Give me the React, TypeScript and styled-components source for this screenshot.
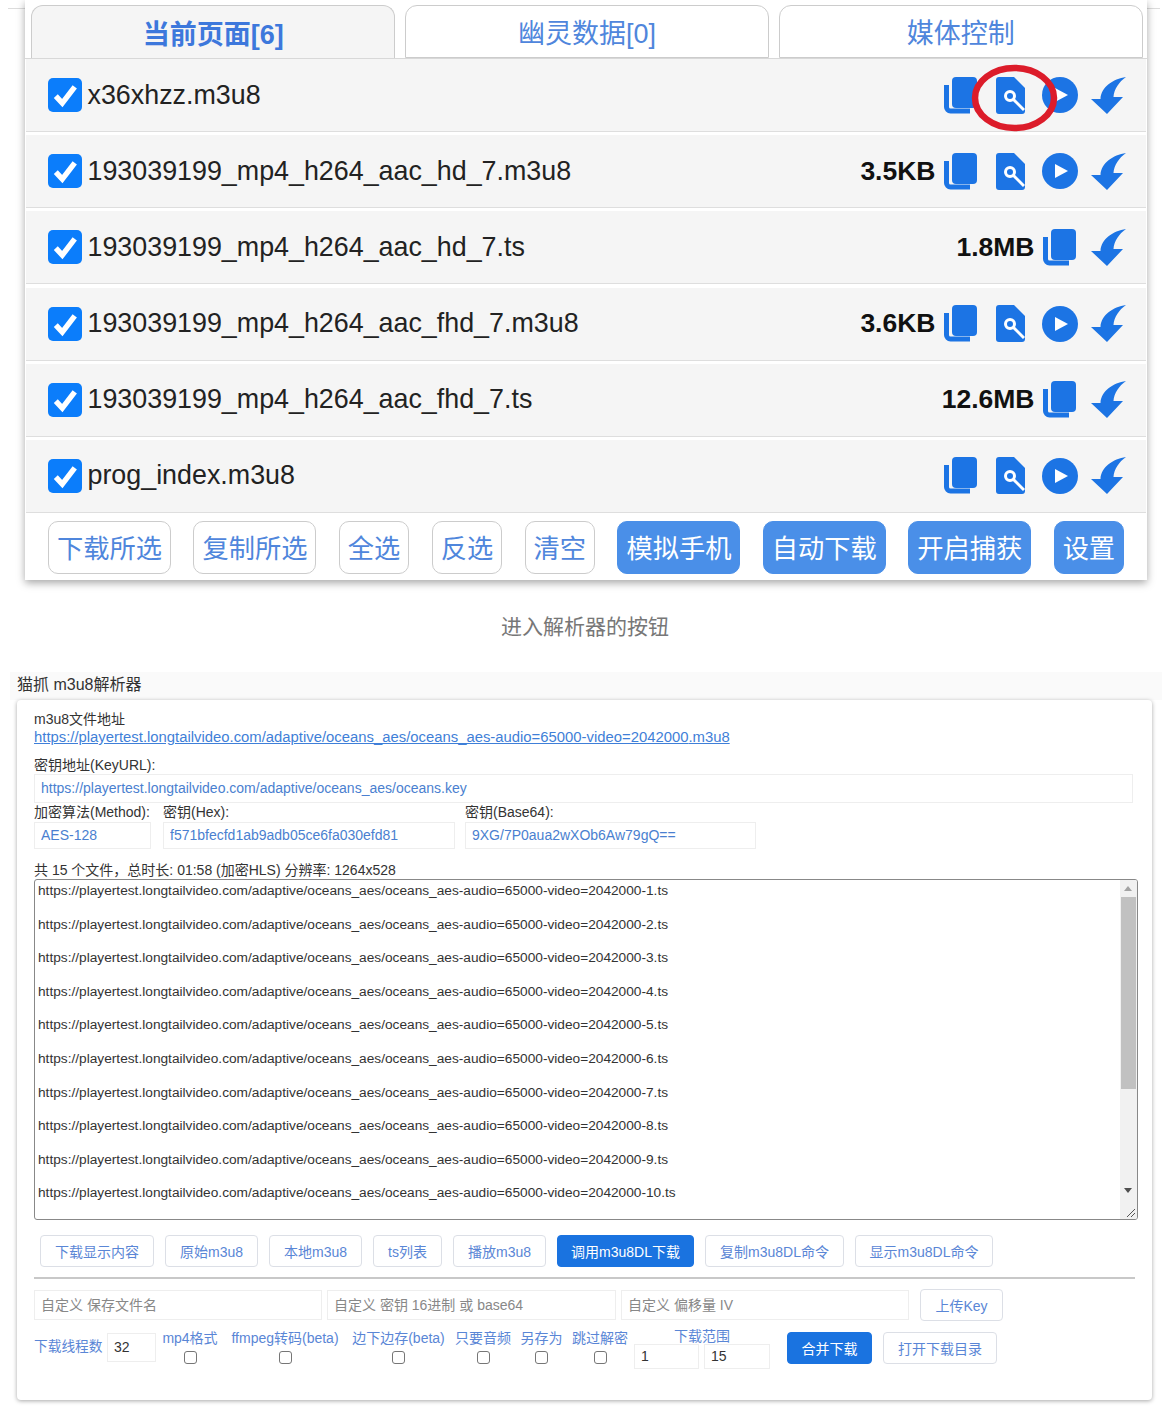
import React from "react";
import styled, { createGlobalStyle } from "styled-components";

const Global = createGlobalStyle`
  html, body { margin: 0; padding: 0; background: #fff; }
  body { width: 1170px; height: 1411px; overflow: hidden; font-family: "Liberation Sans", "Noto Sans CJK SC", sans-serif; }
  * { box-sizing: border-box; }
`;

const Page = styled.div`
  position: relative;
  width: 1170px;
  height: 1411px;
  overflow: hidden;
`;
const EdgeRule = styled.div`
  position: absolute;
  top: 8px;
  left: 8px;
  width: 1152px;
  height: 1px;
  background: #dcdcdc;
`;
const TopPanel = styled.section`
  position: relative;
  margin: 0 23px 0 25px;
  height: 580px;
  background: #fff;
  box-shadow: 0 3px 8px rgba(0, 0, 0, 0.35);
`;
const Tabs = styled.div`
  display: flex;
  gap: 9.5px;
  height: 59px;
  padding: 5px 4px 0 6px;
  border-bottom: 1px solid #d8d8d8;
`;
const Tab = styled.div<{ $active?: boolean }>`
  flex: 1;
  display: flex;
  align-items: center;
  justify-content: center;
  height: 53px;
  border: 1px solid #ccc;
  border-bottom: ${(p) => (p.$active ? "none" : "1px solid #ccc")};
  border-radius: 12px 12px 0 0;
  background: ${(p) => (p.$active ? "#f5f5f5" : "#fff")};
  color: ${(p) => (p.$active ? "#3d78dc" : "#4f86dc")};
  font-size: 27px;
  font-weight: ${(p) => (p.$active ? 700 : 400)};
`;
const RowList = styled.div`
  display: flex;
  flex-direction: column;
  gap: 3.2px;
`;
const Row = styled.div`
  display: flex;
  align-items: center;
  height: 73px;
  margin: 0 1px;
  padding: 0 19px 0 22px;
  background: #f5f5f5;
  border-bottom: 1px solid #dedede;
`;
const Check = styled.span`
  display: flex;
  align-items: center;
  justify-content: center;
  width: 34px;
  height: 34px;
  border-radius: 5px;
  background: #0b7dfb;
  flex: none;
`;
const FileName = styled.span`
  margin-left: 5.5px;
  font-size: 26.85px;
  color: #222;
`;
const Size = styled.span`
  margin-left: auto;
  margin-right: 7px;
  font-size: 26.5px;
  font-weight: 700;
  color: #111;
`;
const Icons = styled.div<{ $auto?: boolean }>`
  display: flex;
  align-items: center;
  gap: 13.5px;
  margin-left: ${(p) => (p.$auto ? "auto" : "0")};
`;
const IconBox = styled.span`
  display: flex;
  align-items: center;
  justify-content: center;
  width: 36px;
  height: 37px;
`;
const Footer = styled.div`
  display: flex;
  gap: 22.4px;
  height: 67px;
  padding: 8px 23px 6px 23px;
`;
const BigButton = styled.div<{ $fill?: boolean }>`
  display: flex;
  align-items: center;
  justify-content: center;
  height: 53px;
  padding: 0 8px;
  border-radius: 10px;
  border: 1px solid ${(p) => (p.$fill ? "#4a8fe8" : "#ccc")};
  background: ${(p) => (p.$fill ? "#4a8fe8" : "#fff")};
  color: ${(p) => (p.$fill ? "#fff" : "#4f86dc")};
  font-size: 26.25px;
  white-space: nowrap;
`;
const Ring = styled.svg`
  position: absolute;
  left: 946px;
  top: 64px;
`;
const Caption = styled.div`
  height: 26px;
  margin-top: 34px;
  text-align: center;
  font-size: 21px;
  line-height: 26px;
  color: #777;
`;
const Section = styled.section`
  margin: 32px 8px 0 10px;
  background: linear-gradient(#fafafa, #fafafa 28px, #fff 28px);
`;
const SectionTitle = styled.div`
  height: 28px;
  padding-left: 7px;
  font-size: 16px;
  line-height: 25px;
  color: #333;
`;
const Card = styled.div`
  width: 1135px;
  height: 700px;
  margin-left: 7px;
  padding: 10px 14px 0 17px;
  background: #fff;
  border-radius: 4px;
  box-shadow: 0 1px 4px rgba(0, 0, 0, 0.35);
`;
const Label = styled.div<{ $top?: number }>`
  height: 18px;
  margin-top: ${(p) => p.$top ?? 0}px;
  font-size: 14px;
  line-height: 18px;
  color: #333;
  white-space: nowrap;
`;
const LinkLine = styled.a`
  display: block;
  height: 18px;
  font-size: 14.85px;
  line-height: 18px;
  color: #3f7fd8;
  text-decoration: underline;
  white-space: nowrap;
`;
const Field = styled.input<{ $w: number; $h?: number }>`
  display: block;
  flex: none;
  width: ${(p) => p.$w}px;
  height: ${(p) => p.$h ?? 27}px;
  padding: 0 6px 1px;
  border: 1px solid #eeeeee;
  outline: none;
  background: #fff;
  font-family: inherit;
  font-size: 14px;
  color: #4a7fd0;
  &::placeholder {
    color: #888;
    opacity: 1;
  }
`;
const DarkField = styled(Field)`
  color: #333;
`;
const KeyGrid = styled.div`
  display: grid;
  grid-template-columns: 129px 302px auto;
  height: 46px;
  grid-template-rows: 19px 27px;
  justify-content: start;
`;
const FileBox = styled.div`
  display: flex;
  width: 1104px;
  height: 341px;
  border: 1px solid #888;
  border-radius: 3px;
  overflow: hidden;
`;
const Lines = styled.div`
  flex: 1;
  padding: 2px 0 0 3px;
  overflow: hidden;
`;
const Line = styled.div`
  height: 33.6px;
  font-size: 13.7px;
  line-height: 18px;
  color: #333;
  white-space: nowrap;
`;
const Track = styled.div`
  position: relative;
  flex: none;
  width: 17px;
  background: #f1f1f1;
`;
const Thumb = styled.div`
  position: absolute;
  top: 17px;
  left: 1px;
  width: 15px;
  height: 192px;
  background: #c1c1c1;
`;
const ArrowUp = styled.div`
  position: absolute;
  top: 6px;
  left: 4px;
  border: 4px solid transparent;
  border-top: 0;
  border-bottom: 5px solid #a3a3a3;
`;
const ArrowDown = styled.div`
  position: absolute;
  top: 308px;
  left: 4px;
  border: 4px solid transparent;
  border-bottom: 0;
  border-top: 5px solid #505050;
`;
const Grip = styled.svg`
  position: absolute;
  right: 1px;
  bottom: 1px;
`;
const ButtonRow = styled.div`
  display: flex;
  gap: 11px;
  margin-top: 15px;
  padding-left: 6px;
`;
const SmallButton = styled.div<{ $fill?: boolean; $w: number; $h?: number }>`
  display: flex;
  flex: none;
  align-items: center;
  justify-content: center;
  width: ${(p) => p.$w}px;
  height: ${(p) => p.$h ?? 32}px;
  padding-bottom: 1px;
  border: 1px solid ${(p) => (p.$fill ? "#1a73e0" : "#dcdfe6")};
  border-radius: 4px;
  background: ${(p) => (p.$fill ? "#1a73e0" : "#fff")};
  color: ${(p) => (p.$fill ? "#fff" : "#5a86d6")};
  font-size: 14px;
  white-space: nowrap;
`;
const Divider = styled.div`
  width: 1101px;
  height: 2px;
  margin-top: 10px;
  background: #c8c8c8;
`;
const InputsRow = styled.div`
  display: flex;
  align-items: center;
  gap: 5px;
  margin-top: 10px;
`;
const UploadSlot = styled.div`
  margin-left: 6px;
`;
const OptionsRow = styled.div`
  display: flex;
  align-items: flex-start;
  margin-top: 7px;
`;
const ThreadLabel = styled.span`
  width: 73px;
  margin-top: 10px;
  font-size: 13.7px;
  line-height: 18px;
  color: #5a86d6;
  white-space: nowrap;
`;
const ThreadSlot = styled.div`
  margin-top: 5px;
`;
const Options = styled.div`
  display: flex;
  gap: 10.5px;
  margin-left: 6px;
`;
const Option = styled.label<{ $w: number }>`
  display: flex;
  flex-direction: column;
  align-items: center;
  width: ${(p) => p.$w}px;
  font-size: 14px;
  line-height: 20px;
  color: #5a86d6;
  white-space: nowrap;
`;
const OptionBox = styled.span`
  display: block;
  width: 13px;
  height: 13px;
  margin-top: 3px;
  border: 1px solid #767676;
  border-radius: 3px;
  background: #fff;
`;
const RangeColumn = styled.div`
  display: flex;
  flex-direction: column;
  width: 136px;
  margin-left: 6.5px;
`;
const RangeTitle = styled.div`
  height: 16px;
  text-align: center;
  font-size: 14px;
  line-height: 16px;
  color: #5a86d6;
`;
const RangeInputs = styled.div`
  display: flex;
  gap: 5px;
`;
const ActionSlot = styled.div`
  display: flex;
  gap: 11px;
  margin: 4px 0 0 17px;
`;

const CheckMark = () => (
  <svg width="26" height="26" viewBox="0 0 24 24">
    <path d="M3.5 13 L9.5 19.5 L21 4.5" fill="none" stroke="#fff" strokeWidth="5" />
  </svg>
);
const CopyIcon = () => (
  <svg width="36" height="37" viewBox="0 0 36 37">
    <rect x="9" y="0" width="25" height="31" rx="4" fill="#1c74e4" />
    <path d="M3.5 8 V30 a4 4 0 0 0 4 4 H27" fill="none" stroke="#1c74e4" strokeWidth="5" />
  </svg>
);
const DocIcon = () => (
  <svg width="29" height="37" viewBox="0 0 29 37">
    <path d="M3 0 H18 L29 11 V34 a3 3 0 0 1 -3 3 H3 a3 3 0 0 1 -3 -3 V3 a3 3 0 0 1 3 -3z" fill="#1c74e4" />
    <circle cx="14" cy="19" r="4.5" fill="#1c74e4" stroke="#fff" strokeWidth="3" />
    <path d="M17.5 22.5 L28 33" stroke="#fff" strokeWidth="3" />
  </svg>
);
const PlayIcon = () => (
  <svg width="36" height="36" viewBox="0 0 36 36">
    <circle cx="18" cy="18" r="18" fill="#1c74e4" />
    <path d="M13 11 L26 18 L13 25z" fill="#fff" />
  </svg>
);
const SwooshIcon = () => (
  <svg width="36" height="37" viewBox="0 0 36 37">
    <path d="M35 0 C22 2 10 10 9.5 22 H0 L16 37 L32 20 H22.5 C23 12 28 5 35 0Z" fill="#1c74e4" />
  </svg>
);

const files = [
  { name: "x36xhzz.m3u8", play: true },
  { name: "193039199_mp4_h264_aac_hd_7.m3u8", size: "3.5KB", play: true },
  { name: "193039199_mp4_h264_aac_hd_7.ts", size: "1.8MB" },
  { name: "193039199_mp4_h264_aac_fhd_7.m3u8", size: "3.6KB", play: true },
  { name: "193039199_mp4_h264_aac_fhd_7.ts", size: "12.6MB" },
  { name: "prog_index.m3u8", play: true },
];
const outlined = ["下载所选", "复制所选", "全选", "反选", "清空"];
const filled = ["模拟手机", "自动下载", "开启捕获", "设置"];
const base = "https://playertest.longtailvideo.com/adaptive/oceans_aes/oceans_aes-audio=65000-video=2042000";
const tools: [string, number, boolean?][] = [
  ["下载显示内容", 114],
  ["原始m3u8", 93],
  ["本地m3u8", 93],
  ["ts列表", 69],
  ["播放m3u8", 93],
  ["调用m3u8DL下载", 137, true],
  ["复制m3u8DL命令", 139],
  ["显示m3u8DL命令", 138],
];
const options: [string, number][] = [
  ["mp4格式", 56],
  ["ffmpeg转码(beta)", 113],
  ["边下边存(beta)", 93],
  ["只要音频", 55],
  ["另存为", 41],
  ["跳过解密", 55],
];

export default function App() {
  return (
    <Page>
      <Global />
      <EdgeRule />
      <TopPanel>
        <Tabs>
          <Tab $active>当前页面[6]</Tab>
          <Tab>幽灵数据[0]</Tab>
          <Tab>媒体控制</Tab>
        </Tabs>
        <RowList>
          {files.map((f) => (
            <Row key={f.name}>
              <Check>
                <CheckMark />
              </Check>
              <FileName>{f.name}</FileName>
              {f.size && <Size>{f.size}</Size>}
              <Icons $auto={!f.size}>
                <IconBox><CopyIcon /></IconBox>
                {f.play && <IconBox><DocIcon /></IconBox>}
                {f.play && <IconBox><PlayIcon /></IconBox>}
                <IconBox><SwooshIcon /></IconBox>
              </Icons>
            </Row>
          ))}
        </RowList>
        <Footer>
          {outlined.map((t) => (
            <BigButton key={t}>{t}</BigButton>
          ))}
          {filled.map((t) => (
            <BigButton key={t} $fill>{t}</BigButton>
          ))}
        </Footer>
        <Ring width="90" height="70" viewBox="0 0 90 70">
          <ellipse cx="43.5" cy="34" rx="39.5" ry="30" fill="none" stroke="#dc1c2a" strokeWidth="6.5" />
        </Ring>
      </TopPanel>
      <Caption>进入解析器的按钮</Caption>
      <Section>
        <SectionTitle>猫抓 m3u8解析器</SectionTitle>
        <Card>
          <Label>m3u8文件地址</Label>
          <LinkLine>{base}.m3u8</LinkLine>
          <Label $top={10}>密钥地址(KeyURL):</Label>
          <Field $w={1099} $h={29} readOnly value="https://playertest.longtailvideo.com/adaptive/oceans_aes/oceans.key" />
          <KeyGrid>
            <Label>加密算法(Method):</Label>
            <Label>密钥(Hex):</Label>
            <Label>密钥(Base64):</Label>
            <Field $w={117} readOnly value="AES-128" />
            <Field $w={292} readOnly value="f571bfecfd1ab9adb05ce6fa030efd81" />
            <Field $w={291} readOnly value="9XG/7P0aua2wXOb6Aw79gQ==" />
          </KeyGrid>
          <Label $top={12}>共 15 个文件，总时长: 01:58 (加密HLS) 分辨率: 1264x528</Label>
          <FileBox>
            <Lines>
              {Array.from({ length: 10 }, (_, i) => (
                <Line key={i}>{`${base}-${i + 1}.ts`}</Line>
              ))}
            </Lines>
            <Track>
              <ArrowUp />
              <Thumb />
              <ArrowDown />
              <Grip width="12" height="12" viewBox="0 0 12 12">
                <path d="M3 11 L11 3 M7 11 L11 7" stroke="#555" strokeWidth="1" />
              </Grip>
            </Track>
          </FileBox>
          <ButtonRow>
            {tools.map(([t, w, fill]) => (
              <SmallButton key={t} $w={w} $fill={fill}>{t}</SmallButton>
            ))}
          </ButtonRow>
          <Divider />
          <InputsRow>
            <Field $w={288} $h={30} readOnly placeholder="自定义 保存文件名" />
            <Field $w={289} $h={30} readOnly placeholder="自定义 密钥 16进制 或 base64" />
            <Field $w={288} $h={30} readOnly placeholder="自定义 偏移量 IV" />
            <UploadSlot>
              <SmallButton $w={83}>上传Key</SmallButton>
            </UploadSlot>
          </InputsRow>
          <OptionsRow>
            <ThreadLabel>下载线程数</ThreadLabel>
            <ThreadSlot>
              <DarkField $w={49} $h={29} readOnly value="32" />
            </ThreadSlot>
            <Options>
              {options.map(([o, w]) => (
                <Option key={o} $w={w}>
                  {o}
                  <OptionBox />
                </Option>
              ))}
            </Options>
            <RangeColumn>
              <RangeTitle>下载范围</RangeTitle>
              <RangeInputs>
                <DarkField $w={65} $h={25} readOnly value="1" />
                <DarkField $w={66} $h={25} readOnly value="15" />
              </RangeInputs>
            </RangeColumn>
            <ActionSlot>
              <SmallButton $w={85} $fill>合并下载</SmallButton>
              <SmallButton $w={114}>打开下载目录</SmallButton>
            </ActionSlot>
          </OptionsRow>
        </Card>
      </Section>
    </Page>
  );
}
